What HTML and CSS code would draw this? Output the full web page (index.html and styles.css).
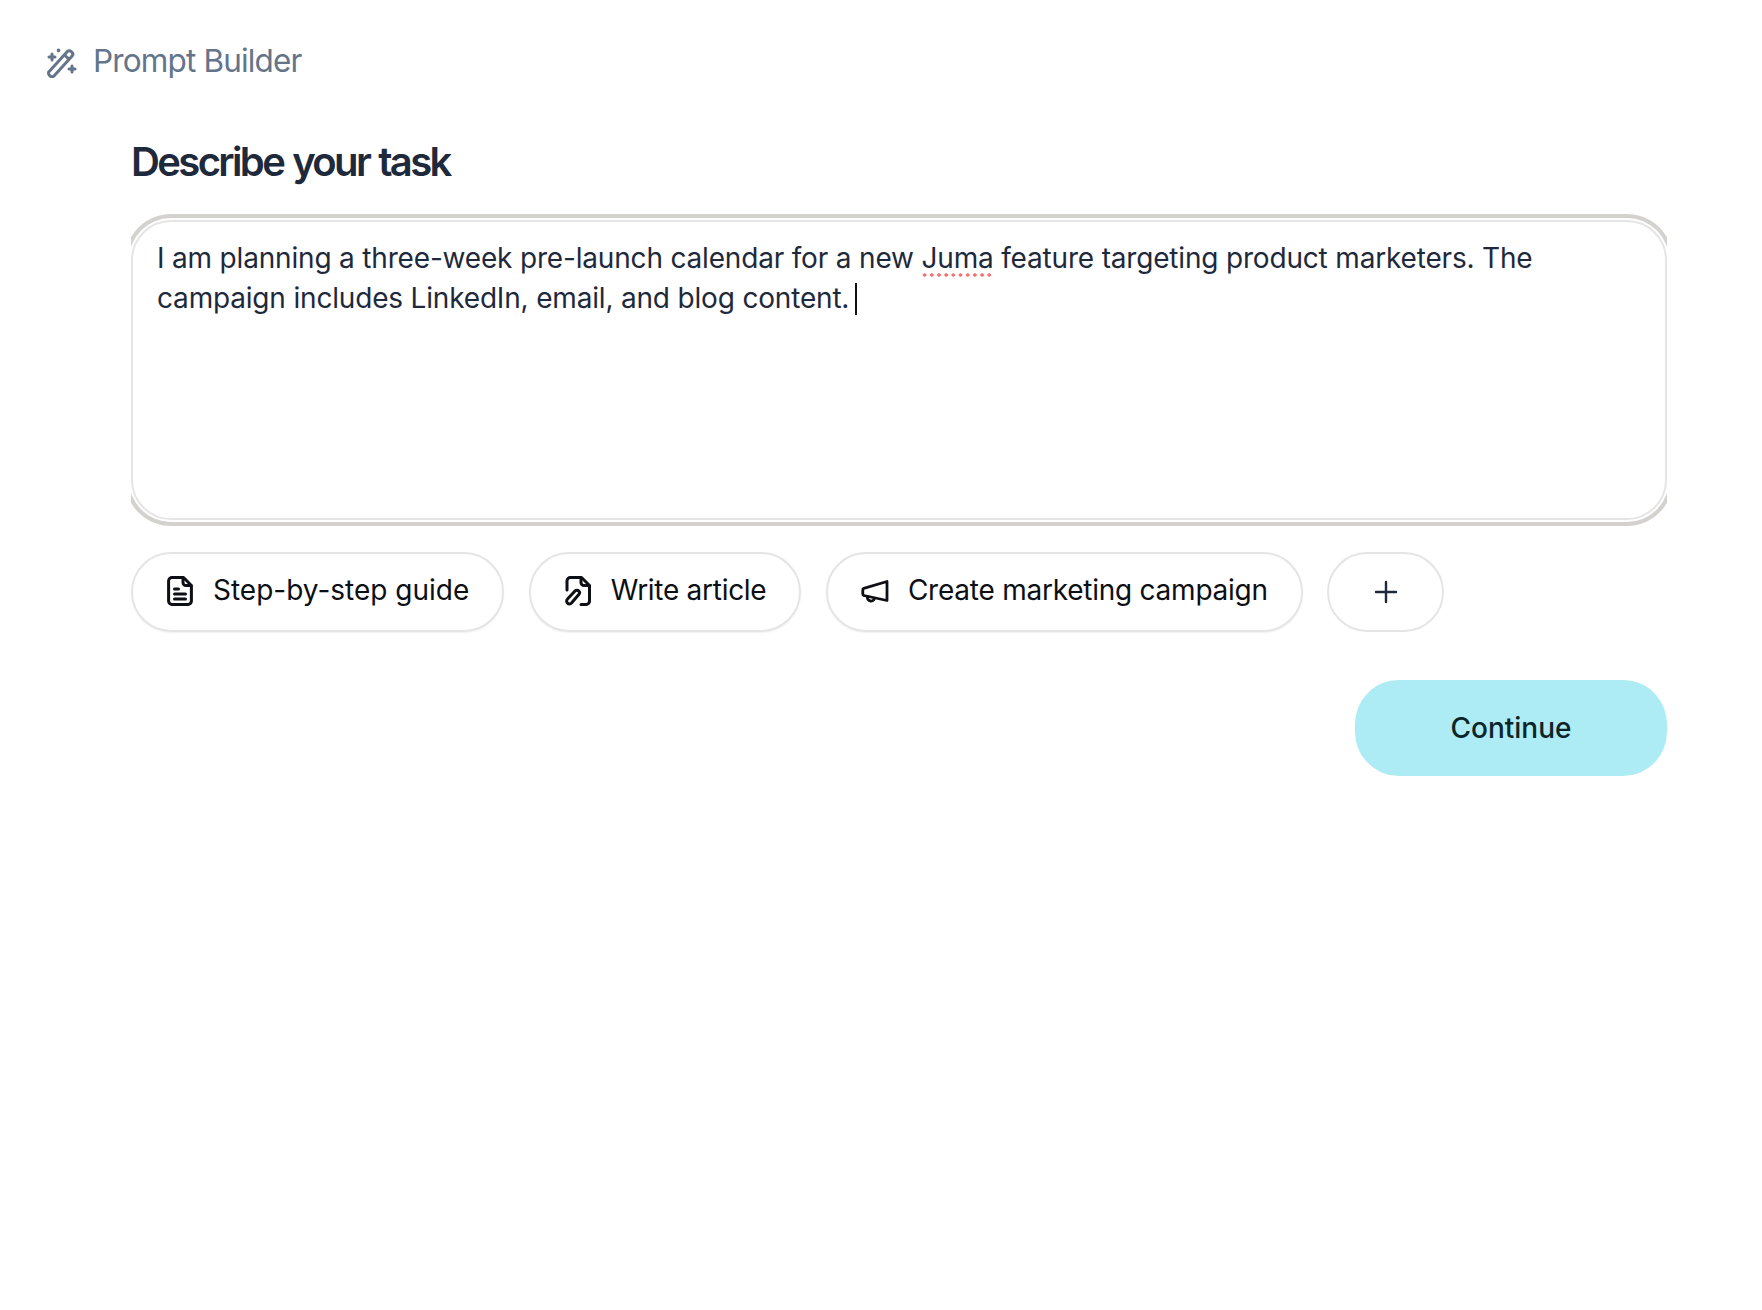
FILE: index.html
```html
<!DOCTYPE html>
<html lang="en">
<head>
<meta charset="utf-8">
<title>Prompt Builder</title>
<link rel="stylesheet" href="styles.css">
</head>
<body>
<header class="topbar">
  <svg class="wand" viewBox="0 0 32 32" fill="none" stroke="currentColor" stroke-width="3" stroke-linecap="round" stroke-linejoin="round">
    <path d="M4.200 25.400 22.400 5.600a2.600 2.600 0 0 1 3.700-.1l.9.9a2.600 2.600 0 0 1 .1 3.600L9 30a2.600 2.600 0 0 1-3.700.1l-1-1a2.600 2.600 0 0 1-.1-3.700Z"/>
    <path d="m19.500 9 4.400 4.200"/>
    <path d="M7 8v6M4 11h6"/>
    <path d="M13.500 4.200v.4" stroke-width="3.600"/>
    <path d="M27 20v6M24 23h6"/>
  </svg>
  <span class="brand">Prompt Builder</span>
</header>
<main class="content">
  <h1 class="title">Describe your task</h1>
  <div class="editor">
    I am planning a three-week pre-launch calendar for a new <span class="misspelt">Juma</span> feature targeting product marketers. The campaign includes LinkedIn, email, and blog content.<span class="caret"></span>
  </div>
  <div class="chips">
    <button class="chip chip-guide">
      <svg class="chip-icon" viewBox="0 0 32 32" fill="none" stroke="currentColor" stroke-width="3" stroke-linecap="round" stroke-linejoin="round">
        <path d="M19.500 2.500H8A3.400 3.400 0 0 0 4.600 5.900v20.200A3.400 3.400 0 0 0 8 29.500h16a3.400 3.400 0 0 0 3.400-3.400V10.500Z"/>
        <path d="M19 3v4.500a3 3 0 0 0 3 3h5"/>
        <path d="M10.500 14h4M10.500 19h11M10.500 24h11"/>
      </svg>
      <span>Step-by-step guide</span>
    </button>
    <button class="chip chip-article">
      <svg class="chip-icon" viewBox="0 0 32 32" fill="none" stroke="currentColor" stroke-width="3" stroke-linecap="round" stroke-linejoin="round">
        <path d="M5 15V5.900A3.400 3.400 0 0 1 8.400 2.500H19.500l8 8v15.600a3.400 3.400 0 0 1-3.400 3.400H19"/>
        <path d="M19 3v4.500a3 3 0 0 0 3 3h5"/>
        <path d="M5.500 24 13 16a2.600 2.600 0 0 1 3.700-.1 2.600 2.600 0 0 1 .1 3.600L9.500 28a2.800 2.800 0 0 1-4 .1 2.900 2.900 0 0 1 0-4.100Z"/>
      </svg>
      <span>Write article</span>
    </button>
    <button class="chip chip-campaign">
      <svg class="chip-icon" viewBox="0 0 32 32" fill="none" stroke="currentColor" stroke-width="2.800" stroke-linecap="round" stroke-linejoin="round">
        <path d="M28 6.500v19L5 20.500a1.400 1.400 0 0 1-1.200-1.400v-4.400A1.400 1.400 0 0 1 4.800 13.300Z"/>
        <path d="M8.500 21.500a3.600 3.600 0 0 0 7 1.800"/>
      </svg>
      <span>Create marketing campaign</span>
    </button>
    <button class="chip chip-add" aria-label="Add">
      <svg class="plus-icon" viewBox="0 0 24 24" fill="none" stroke="currentColor" stroke-width="2.400" stroke-linecap="round">
        <path d="M12 2v20M2 12h20"/>
      </svg>
    </button>
  </div>
  <div class="actions">
    <button class="continue">Continue</button>
  </div>
</main>
</body>
</html>
```
FILE: styles.css
```css
* { box-sizing: border-box; }

html, body {
  margin: 0;
  background: #fff;
}

body {
  font-family: Inter, "Noto Sans", sans-serif;
  min-height: 1310px;
}

.topbar {
  display: flex;
  align-items: center;
  gap: 16px;
  height: 40px;
  margin: 40px 0 0 45px;
  color: #64748b;
}

.wand {
  width: 32px;
  height: 32px;
  margin-top: 4px;
}

.brand {
  font-size: 31.5px;
  letter-spacing: -0.85px;
}

.content {
  display: flex;
  flex-direction: column;
  padding: 0 95px 0 131px;
}

.title {
  margin: 58px 0 0;
  height: 48px;
  line-height: 48px;
  font-size: 40px;
  font-weight: 600;
  letter-spacing: -2.62px;
  word-spacing: 1.5px;
  color: #1e293b;
}

.editor {
  margin-top: 34px;
  height: 300px;
  padding: 16px 24px;
  border: 2px solid #e5e5e5;
  border-radius: 40px;
  background: #fff;
  box-shadow: 0 0 0 2px #fff, 0 0 0 6px #d4d2ce;
  clip-path: inset(-8px 0);
  font-size: 28px;
  line-height: 40px;
  letter-spacing: -0.18px;
  color: #1e293b;
}

.misspelt {
  position: relative;
}

.misspelt::after {
  content: "";
  position: absolute;
  left: 0;
  right: 0;
  bottom: -2px;
  height: 4px;
  background: radial-gradient(circle at center, #f87171 1.5px, transparent 1.8px) 0 0 / 7.200px 4px repeat-x;
}

.caret {
  display: inline-block;
  width: 2px;
  height: 32px;
  margin-left: 6px;
  vertical-align: -7px;
  background: #111;
}

.chips {
  display: flex;
  gap: 24.5px;
  margin-top: 32px;
}

.chip {
  display: flex;
  align-items: center;
  gap: 17px;
  height: 80px;
  padding: 0 33px 0 30px;
  border: 2px solid #e5e5e5;
  border-radius: 40px;
  background: #fff;
  box-shadow: 0 1px 2px rgba(0, 0, 0, 0.06);
  font-family: inherit;
  font-size: 28px;
  color: #0c0f14;
}

.chip > span {
  position: relative;
  top: -2px;
}

.chip-article {
  letter-spacing: -0.28px;
}

.chip-campaign {
  letter-spacing: -0.24px;
}

.chip-icon {
  width: 32px;
  height: 32px;
  flex: none;
  margin: -2px 0 0 1px;
}

.chip-add {
  width: 117px;
  justify-content: center;
  padding: 0;
  box-shadow: none;
  color: #1e293b;
}

.plus-icon {
  width: 24px;
  height: 24px;
}

.actions {
  display: flex;
  justify-content: flex-end;
  margin-top: 48px;
}

.continue {
  width: 312px;
  height: 96px;
  border: 0;
  border-radius: 44px;
  background: #aeecf5;
  font-family: inherit;
  font-size: 28px;
  font-weight: 500;
  color: #0b2529;
}
```
